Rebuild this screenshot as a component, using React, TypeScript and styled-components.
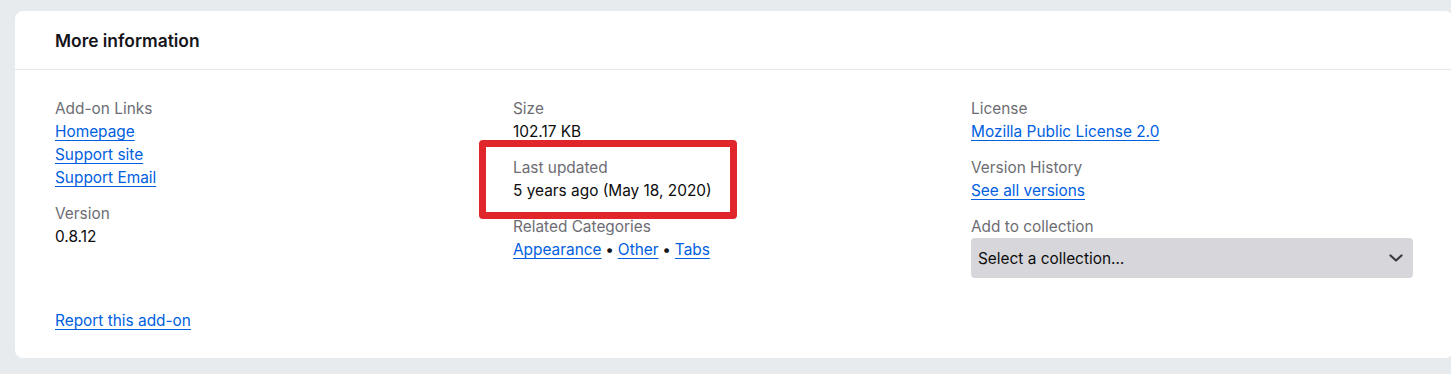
import React from "react";
import styled, { createGlobalStyle } from "styled-components";

const Global = createGlobalStyle`
  html, body { margin: 0; padding: 0; background: #e8ebee; }
  body { font-family: Inter, "Noto Sans", sans-serif; color: #15141a; }
  * { box-sizing: border-box; }
`;

const Page = styled.div`
  padding: 11px 0 0 15px;
  width: 1451px;
  height: 374px;
  overflow: hidden;
`;

const Card = styled.section`
  width: 1438px;
  background: #ffffff;
  border-radius: 8px;
`;

const Header = styled.header`
  height: 59px;
  display: flex;
  align-items: center;
  padding: 2px 40px 0;
  border-bottom: 1px solid #e6e7ea;
`;

const Title = styled.h2`
  margin: 0;
  font-size: 17.4px;
  font-weight: 600;
  line-height: 24px;
  color: #15141a;
`;

const Body = styled.div`
  padding: 27px 40px 26px;
`;

const Columns = styled.div`
  display: grid;
  grid-template-columns: repeat(3, 442px);
  column-gap: 16px;
  position: relative;
`;

const Column = styled.dl`
  margin: 0;
  display: flex;
  flex-direction: column;
`;

const Item = styled.div`
  display: flex;
  flex-direction: column;
  margin-bottom: 13px;
`;

const Term = styled.dt`
  font-size: 15.4px;
  line-height: 23px;
  color: #6d6d73;
`;

const Def = styled.dd`
  margin: 0;
  font-size: 15.4px;
  font-weight: 400;
  line-height: 23px;
  color: #0c0c0d;
  display: flex;
  flex-direction: column;
  align-items: flex-start;
`;

const InlineDef = styled(Def)`
  flex-direction: row;
  align-items: baseline;
  white-space: pre;
`;

const Link = styled.a`
  color: #0060df;
  font-weight: 400;
  text-decoration: underline;
  text-underline-offset: 3px;
  text-decoration-thickness: 1px;
  cursor: pointer;
`;

const Bullet = styled.span`
  color: #15141a;
  font-weight: 400;
  margin: 0 -0.5px;
`;

const SelectBox = styled.div`
  width: 442px;
  height: 40px;
  background: #d7d7db;
  border-radius: 4px;
  display: flex;
  align-items: center;
  justify-content: space-between;
  padding: 0 9px 0 7px;
  font-size: 15.4px;
  font-weight: 400;
  color: #0c0c0d;
`;

const Highlight = styled.div`
  position: absolute;
  left: 424px;
  top: 43px;
  width: 258px;
  height: 79px;
  border: 7px solid #e0262a;
  border-radius: 4px;
  pointer-events: none;
`;

const Footer = styled.div`
  margin-top: 18px;
  font-size: 15.4px;
  line-height: 23px;
`;

const Chevron = () => (
  <svg width="16" height="16" viewBox="0 0 16 16" fill="none">
    <path d="M2.5 5.5l5.5 5 5.5-5" stroke="#3a3a3e" strokeWidth="2.2" strokeLinecap="round" strokeLinejoin="round" />
  </svg>
);

export default function App() {
  return (
    <Page>
      <Global />
      <Card>
        <Header>
          <Title>More information</Title>
        </Header>
        <Body>
          <Columns>
            <Column>
              <Item>
                <Term>Add-on Links</Term>
                <Def>
                  <Link>Homepage</Link>
                  <Link>Support site</Link>
                  <Link>Support Email</Link>
                </Def>
              </Item>
              <Item>
                <Term>Version</Term>
                <Def>0.8.12</Def>
              </Item>
            </Column>
            <Column>
              <Item>
                <Term>Size</Term>
                <Def>102.17 KB</Def>
              </Item>
              <Item>
                <Term>Last updated</Term>
                <Def>5 years ago (May 18, 2020)</Def>
              </Item>
              <Item>
                <Term>Related Categories</Term>
                <InlineDef>
                  <Link>Appearance</Link>
                  <Bullet> • </Bullet>
                  <Link>Other</Link>
                  <Bullet> • </Bullet>
                  <Link>Tabs</Link>
                </InlineDef>
              </Item>
            </Column>
            <Column>
              <Item>
                <Term>License</Term>
                <Def>
                  <Link>Mozilla Public License 2.0</Link>
                </Def>
              </Item>
              <Item>
                <Term>Version History</Term>
                <Def>
                  <Link>See all versions</Link>
                </Def>
              </Item>
              <Item>
                <Term>Add to collection</Term>
                <Def>
                  <SelectBox>
                    <span>Select a collection…</span>
                    <Chevron />
                  </SelectBox>
                </Def>
              </Item>
            </Column>
            <Highlight />
          </Columns>
          <Footer>
            <Link>Report this add-on</Link>
          </Footer>
        </Body>
      </Card>
    </Page>
  );
}
